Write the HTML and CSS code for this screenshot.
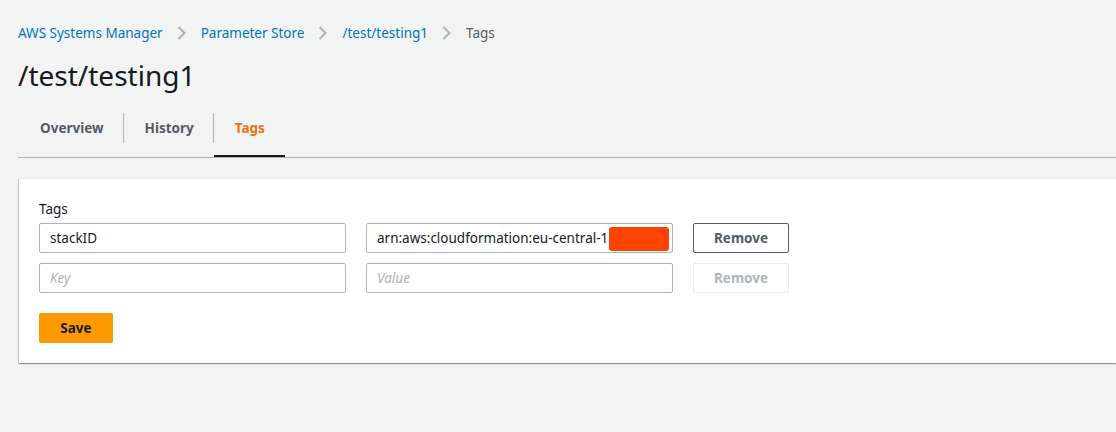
FILE: index.html
```html
<!DOCTYPE html>
<html lang="en">
<head>
<meta charset="utf-8">
<title>/test/testing1 - Tags</title>
<link rel="stylesheet" href="styles.css">
</head>
<body>
<div class="page">
  <nav class="breadcrumbs">
    <a class="crumb" href="#">AWS Systems Manager</a>
    <svg class="chev" width="9" height="14" viewBox="0 0 9 14"><path d="M1.5 1 L7.5 7 L1.5 13" fill="none" stroke="#aab7b8" stroke-width="2"/></svg>
    <a class="crumb" href="#">Parameter Store</a>
    <svg class="chev" width="9" height="14" viewBox="0 0 9 14"><path d="M1.5 1 L7.5 7 L1.5 13" fill="none" stroke="#aab7b8" stroke-width="2"/></svg>
    <a class="crumb" href="#">/test/testing1</a>
    <svg class="chev" width="9" height="14" viewBox="0 0 9 14"><path d="M1.5 1 L7.5 7 L1.5 13" fill="none" stroke="#aab7b8" stroke-width="2"/></svg>
    <span class="crumb current">Tags</span>
  </nav>
  <h1 class="title">/test/testing1</h1>
  <div class="tabs">
    <div class="tab tab-first"><span class="tab-label">Overview</span></div>
    <div class="tab-sep"></div>
    <div class="tab"><span class="tab-label">History</span></div>
    <div class="tab-sep"></div>
    <div class="tab tab-active"><span class="tab-label">Tags</span></div>
  </div>
  <div class="card">
    <div class="field-label">Tags</div>
    <div class="tag-grid">
      <input class="text-input" type="text" value="stackID">
      <div class="redact-wrap">
        <input class="text-input" type="text" value="arn:aws:cloudformation:eu-central-1">
        <span class="redact"></span>
      </div>
      <button class="btn-normal">Remove</button>
      <input class="text-input" type="text" placeholder="Key">
      <input class="text-input" type="text" placeholder="Value">
      <button class="btn-normal btn-disabled" disabled>Remove</button>
    </div>
    <button class="btn-primary">Save</button>
  </div>
</div>
</body>
</html>
```

FILE: styles.css
```css
html, body {
  margin: 0;
  padding: 0;
  background: #f2f3f3;
  overflow: hidden;
}
body {
  font-family: "Noto Sans", "Open Sans", sans-serif;
  font-size: 13.5px;
  color: #16191f;
  width: 1116px;
  height: 432px;
}
.page {
  padding-left: 18px;
}
.breadcrumbs {
  display: flex;
  align-items: center;
  padding-top: 23px;
  height: 20px;
  line-height: 20px;
}
.crumb {
  color: #0073bb;
  text-decoration: none;
  font-size: 13.5px;
}
.crumb.current {
  color: #545b64;
}
.chev {
  margin: 0 15px 0 14px;
  display: block;
}
.title {
  margin: 14px 0 0 0;
  font-size: 28px;
  line-height: 36px;
  font-weight: 400;
  color: #16191f;
}
.tabs {
  display: flex;
  align-items: flex-start;
  margin-top: 20px;
  border-bottom: 1px solid #aab7b8;
}
.tab {
  height: 42px;
  border-bottom: 2px solid transparent;
  padding: 0 19px 0 21px;
  font-weight: 700;
  color: #545b64;
}
.tab-first {
  padding-left: 22px;
}
.tab-label {
  display: block;
  line-height: 30px;
}
.tab-active {
  color: #ec7211;
  border-bottom-color: #16191f;
  padding-right: 20px;
}
.tab-sep {
  width: 1px;
  height: 30px;
  background: #aab7b8;
}
.card {
  margin-top: 20px;
  margin-left: 1px;
  background: #fff;
  border-top: 1px solid #eaeded;
  box-shadow: 0 1px 1px 0 rgba(0, 28, 36, 0.3), -1px 1px 1px 0 rgba(0, 28, 36, 0.15);
  padding: 20px 20px 20px 20px;
}
.field-label {
  line-height: 20px;
  margin-bottom: 4px;
  color: #16191f;
}
.tag-grid {
  display: grid;
  grid-template-columns: 307px 307px 96px;
  column-gap: 20px;
  row-gap: 10px;
  margin-bottom: 20px;
}
.text-input {
  box-sizing: border-box;
  width: 100%;
  height: 30px;
  margin: 0;
  padding: 0 10px;
  border: 1px solid #aab7b8;
  border-radius: 2px;
  font-family: inherit;
  font-size: 13.5px;
  color: #16191f;
  background: #fff;
  outline: none;
}
.text-input::placeholder {
  color: #aab7b8;
  font-style: italic;
}
.redact-wrap {
  position: relative;
}
.redact {
  position: absolute;
  left: 243px;
  top: 4px;
  width: 60px;
  height: 24px;
  border-radius: 3px;
  background: #ff4300;
}
.btn-normal {
  box-sizing: border-box;
  height: 30px;
  margin: 0;
  padding: 0 20px;
  border: 1px solid #545b64;
  border-radius: 2px;
  background: #fff;
  color: #545b64;
  font-family: inherit;
  font-size: 13.5px;
  font-weight: 700;
}
.btn-disabled {
  border-color: #eaeded;
  color: #aab7b8;
}
.btn-primary {
  display: block;
  box-sizing: border-box;
  width: 74px;
  height: 30px;
  margin: 0;
  padding: 0;
  border: 1px solid #ff9900;
  border-radius: 2px;
  background: #ff9900;
  color: #16191f;
  font-family: inherit;
  font-size: 13.5px;
  font-weight: 700;
}
```
